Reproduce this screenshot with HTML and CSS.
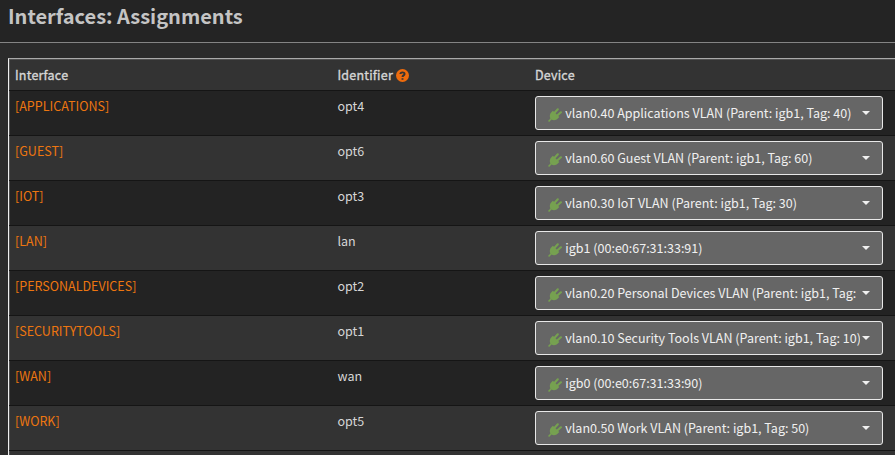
FILE: index.html
```html
<!DOCTYPE html>
<html lang="en">
<head>
<meta charset="utf-8">
<title>Interfaces: Assignments</title>
<link rel="stylesheet" href="styles.css">
</head>
<body>
<svg class="symbols" width="0" height="0" aria-hidden="true">
  <symbol id="plug" viewBox="0 0 14 14"><path d="M0 12.9 2.4 10.5C1.3 8.2 1.8 5.8 3.4 4.2L4.9 2.7 11.3 9.1 9.8 10.6C8.2 12.2 5.8 12.7 3.5 11.6L1.1 14Z"/><path d="M6.4 5 9.8 1.3M9 7.8 12.9 4.3" fill="none" stroke="currentColor" stroke-width="2.1" stroke-linecap="round"/></symbol>
</svg>
<header class="page-head"><h1>Interfaces: Assignments</h1></header>
<main class="table">
  <div class="row head"><div>Interface</div><div>Identifier <svg class="help" viewBox="0 0 12 12"><circle cx="6" cy="6" r="6"/><path d="M4 4.6C4.2 2.7 7.9 2.6 7.9 4.5 7.9 5.9 6 5.8 6 7.3M6 8.5V9.9"/></svg></div><div>Device</div></div>
  <div class="row"><a>[APPLICATIONS]</a><div>opt4</div><button class="select"><svg class="plug"><use href="#plug"/></svg><span>vlan0.40 Applications VLAN (Parent: igb1, Tag: 40)</span><i class="caret"></i></button></div>
  <div class="row"><a>[GUEST]</a><div>opt6</div><button class="select"><svg class="plug"><use href="#plug"/></svg><span>vlan0.60 Guest VLAN (Parent: igb1, Tag: 60)</span><i class="caret"></i></button></div>
  <div class="row"><a>[IOT]</a><div>opt3</div><button class="select"><svg class="plug"><use href="#plug"/></svg><span>vlan0.30 IoT VLAN (Parent: igb1, Tag: 30)</span><i class="caret"></i></button></div>
  <div class="row"><a>[LAN]</a><div>lan</div><button class="select"><svg class="plug"><use href="#plug"/></svg><span>igb1 (00:e0:67:31:33:91)</span><i class="caret"></i></button></div>
  <div class="row"><a>[PERSONALDEVICES]</a><div>opt2</div><button class="select"><svg class="plug"><use href="#plug"/></svg><span>vlan0.20 Personal Devices VLAN (Parent: igb1, Tag:</span><i class="caret"></i></button></div>
  <div class="row"><a>[SECURITYTOOLS]</a><div>opt1</div><button class="select"><svg class="plug"><use href="#plug"/></svg><span>vlan0.10 Security Tools VLAN (Parent: igb1, Tag: 10)</span><i class="caret"></i></button></div>
  <div class="row"><a>[WAN]</a><div>wan</div><button class="select"><svg class="plug"><use href="#plug"/></svg><span>igb0 (00:e0:67:31:33:90)</span><i class="caret"></i></button></div>
  <div class="row"><a>[WORK]</a><div>opt5</div><button class="select"><svg class="plug"><use href="#plug"/></svg><span>vlan0.50 Work VLAN (Parent: igb1, Tag: 50)</span><i class="caret"></i></button></div>
  <div class="row last"></div>
</main>
</body>
</html>
```
FILE: styles.css
```css
* { box-sizing: border-box; }
body {
  margin: 0;
  height: 455px;
  overflow: hidden;
  background: #2b2b2b;
  color: #d6d6d6;
  font: 12.53px/20px "Noto Sans CJK SC", "Noto Sans", sans-serif;
}
.symbols { position: absolute; }
.page-head {
  height: 43px;
  padding: 3px 8px 0;
  background: #242424;
  border-bottom: 1px solid #848484;
}
h1 {
  margin: 0;
  color: #c4c4c4;
  font-size: 20px;
  line-height: 26px;
  font-weight: 600;
}
.table {
  margin: 15px 0 0 8px;
  height: 397px;
  border-top: 1px solid #aaa;
  border-left: 1px solid #eee;
  overflow: hidden;
}
.row {
  display: grid;
  grid-template-columns: 322.5px 197.5px 348px;
  height: 45px;
  padding: 5px 0 0 6px;
  background: #333;
  border-bottom: 1px solid #151515;
  box-shadow: inset 1px 0 #505050;
}
.row:nth-child(even) { background: #232323; }
.row.last { background: #333; }
.row.head {
  height: 32px;
  padding-top: 6px;
  letter-spacing: 0.2px;
  -webkit-text-stroke: 0.35px currentColor;
  box-shadow: inset 1px 1px #505050;
}
.row a { color: #ed7610; }
.help {
  width: 13px;
  height: 13px;
  vertical-align: -2px;
  fill: #ee6b0c;
}
.help path { fill: none; stroke: #333; stroke-width: 1.8; }
.select {
  display: flex;
  align-items: center;
  width: 348px;
  height: 34px;
  padding: 0 12px;
  border: 1px solid #e8e8e8;
  border-radius: 3px;
  background: #666;
  color: #f0f0f0;
  font: inherit;
  text-align: left;
}
.select span {
  flex: 1;
  min-width: 0;
  overflow: hidden;
  white-space: nowrap;
}
.plug {
  flex: none;
  width: 14px;
  height: 14px;
  margin: 4px 3.3px 0 0;
  color: #76a150;
  fill: currentColor;
}
.caret {
  margin-left: 2.5px;
  border: 4px solid transparent;
  border-top-color: #f0f0f0;
  border-bottom: 0;
}
```
